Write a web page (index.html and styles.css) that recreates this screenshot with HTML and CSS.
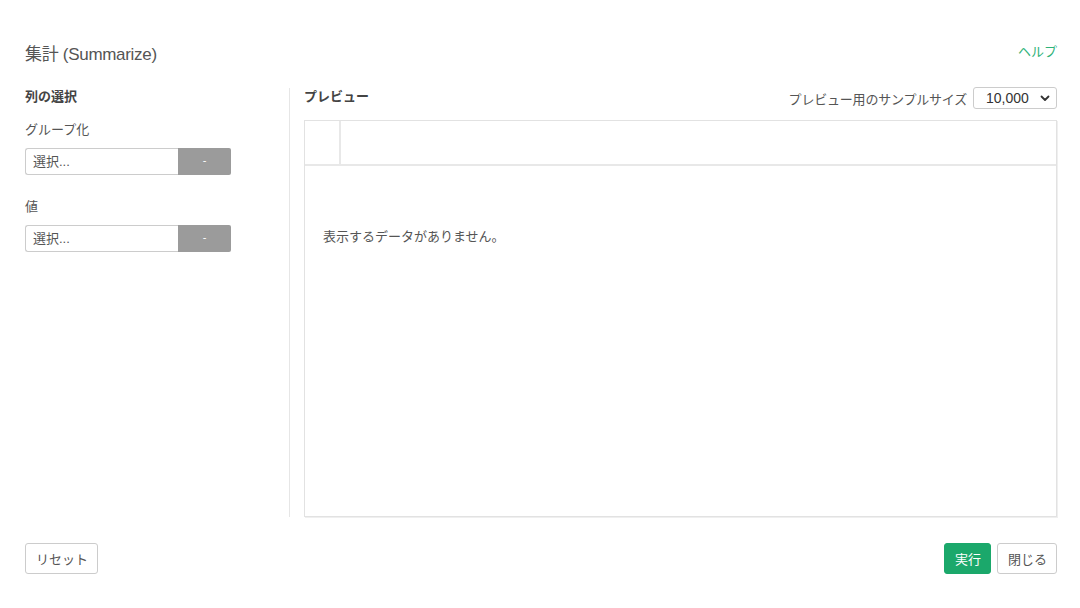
FILE: index.html
```html
<!DOCTYPE html>
<html lang="ja">
<head>
<meta charset="utf-8">
<title>集計 (Summarize)</title>
<link rel="stylesheet" href="styles.css">
</head>
<body>
<div class="dialog">
  <div class="header">
    <h1 class="title">集計 (Summarize)</h1>
    <a class="help" href="#">ヘルプ</a>
  </div>
  <div class="main">
    <div class="left">
      <div class="section-title">列の選択</div>
      <div class="field-label">グループ化</div>
      <div class="picker">
        <div class="picker-input">選択...</div>
        <div class="picker-btn">-</div>
      </div>
      <div class="field-label second">値</div>
      <div class="picker">
        <div class="picker-input">選択...</div>
        <div class="picker-btn">-</div>
      </div>
    </div>
    <div class="right">
      <div class="preview-head">
        <div class="section-title">プレビュー</div>
        <div class="sample">
          <span class="sample-label">プレビュー用のサンプルサイズ</span>
          <div class="sample-select">
            <span>10,000</span>
            <svg class="chev" width="10" height="7" viewBox="0 0 10 7"><path d="M1.5 1.5 L5 5 L8.5 1.5" fill="none" stroke="#333" stroke-width="1.8" stroke-linecap="round" stroke-linejoin="round"/></svg>
          </div>
        </div>
      </div>
      <div class="preview-box">
        <div class="preview-row">
          <div class="preview-cell"></div>
        </div>
        <div class="preview-empty">表示するデータがありません。</div>
      </div>
    </div>
  </div>
  <div class="footer">
    <button class="btn">リセット</button>
    <div class="footer-right">
      <button class="btn btn-primary">実行</button>
      <button class="btn">閉じる</button>
    </div>
  </div>
</div>
</body>
</html>
```

FILE: styles.css
```css
* { box-sizing: border-box; }
html, body { margin: 0; padding: 0; background: #fff; }
body {
  font-family: "Liberation Sans", "Noto Sans CJK JP", sans-serif;
  color: #555;
  font-size: 13px;
}
.dialog {
  width: 1080px;
  height: 608px;
  padding: 40px 23px 0 25px;
}
.header {
  display: flex;
  justify-content: space-between;
  align-items: flex-start;
  height: 48px;
}
.title {
  margin: 2px 0 0;
  font-size: 17px;
  font-weight: normal;
  line-height: 26px;
  color: #555;
  letter-spacing: -0.3px;
}
.help {
  color: #2eb27a;
  text-decoration: none;
  font-size: 13px;
  line-height: 22px;
  margin-top: 1px;
}
.main {
  display: flex;
  height: 429px;
}
.left {
  width: 265px;
  border-right: 1px solid #e6e6e6;
  padding-right: 58px;
}
.section-title {
  font-weight: bold;
  font-size: 13px;
  line-height: 18px;
  color: #444;
}
.field-label {
  margin-top: 15px;
  line-height: 18px;
  color: #555;
}
.field-label.second { margin-top: 23px; }
.picker {
  display: flex;
  height: 27px;
  margin-top: 9px;
}
.picker-input {
  flex: 1;
  border: 1px solid #ccc;
  border-right: none;
  border-radius: 3px 0 0 3px;
  padding: 0 7px;
  line-height: 25px;
  color: #555;
}
.picker-btn {
  width: 53px;
  background: #9b9b9b;
  color: #fff;
  border-radius: 0 2px 2px 0;
  text-align: center;
  line-height: 25px;
  font-size: 11px;
}
.right {
  flex: 1;
  padding-left: 14px;
  display: flex;
  flex-direction: column;
}
.preview-head {
  display: flex;
  justify-content: space-between;
  align-items: flex-start;
  height: 32px;
}
.sample {
  display: flex;
  align-items: center;
  gap: 6px;
  margin-top: -1px;
}
.sample-label { color: #555; letter-spacing: -0.2px; }
.sample-select {
  width: 84px;
  height: 22px;
  border: 1px solid #ccc;
  border-radius: 3px;
  display: flex;
  align-items: center;
  justify-content: space-between;
  padding: 0 6px 0 12px;
  color: #333;
  font-size: 14px;
}
.preview-box {
  flex: 1;
  border: 1px solid #e2e2e2;
  box-shadow: 1px 1px 0 #efefef;
}
.preview-row {
  height: 45px;
  border-bottom: 2px solid #e8e8e8;
}
.preview-cell {
  width: 36px;
  height: 100%;
  border-right: 2px solid #e8e8e8;
}
.preview-empty {
  padding: 63px 18px 0;
  line-height: 16px;
  color: #555;
}
.footer {
  display: flex;
  justify-content: space-between;
  margin-top: 26px;
}
.footer-right { display: flex; gap: 6px; }
.btn {
  font-family: inherit;
  font-size: 13px;
  color: #555;
  background: #fff;
  border: 1px solid #ccc;
  border-radius: 3px;
  height: 31px;
  padding: 0 9px 0 10px;
  cursor: pointer;
}
.btn-primary {
  background: #1ba86b;
  border-color: #1ba86b;
  color: #fff;
}
```
